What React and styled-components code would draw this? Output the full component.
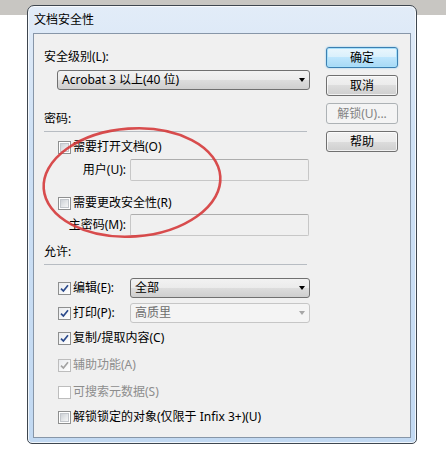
import React from 'react';
import styled, { createGlobalStyle } from 'styled-components';

const GlobalStyle = createGlobalStyle`
  html, body {
    margin: 0;
    padding: 0;
    background: #fff;
  }
  body {
    font-family: "Noto Sans", "Noto Sans CJK SC", sans-serif;
    font-size: 12px;
    color: #000;
  }
`;

const Page = styled.div`
  position: relative;
  width: 446px;
  height: 469px;
  overflow: hidden;
  box-sizing: border-box;
  padding: 5px 0 0 27px;
  background: linear-gradient(#c8c6c2 0, #c8c6c2 15px, #fff 15px);
`;

const Window = styled.div`
  width: 390px;
  height: 439px;
  box-sizing: border-box;
  border: 1px solid #3e464f;
  border-radius: 7px 7px 5px 5px;
  background: linear-gradient(180deg, #e2ecf8 0%, #cfe1f5 30%, #c2d9f2 100%);
  box-shadow: inset 0 0 0 1px rgba(255, 255, 255, 0.75);
  padding: 0 5px 5px 5px;
  display: flex;
  flex-direction: column;
`;

const TitleBar = styled.div`
  height: 27px;
  display: flex;
  align-items: center;
  padding: 1px 0 0 1px;
  box-sizing: border-box;
  font-size: 12px;
  line-height: 16px;
`;

const Client = styled.div`
  flex: 1;
  box-sizing: border-box;
  border: 1px solid #8796a8;
  background: #f0f0f0;
  display: flex;
  padding: 14px 0 0 10px;
`;

const LeftCol = styled.div`
  width: 266px;
  padding-top: 1px;
  display: flex;
  flex-direction: column;
`;

const RightCol = styled.div`
  width: 72px;
  margin: -1px 0 0 16px;
  display: flex;
  flex-direction: column;
  gap: 7px;
`;

const Label = styled.div`
  line-height: 16px;
  height: 16px;
  margin-top: ${(p) => p.$mt || 0}px;
`;

const Separator = styled.div`
  width: 263px;
  height: 1px;
  background: #b7bcc2;
  margin-top: 4px;
`;

const Combo = styled.div`
  box-sizing: border-box;
  height: 20px;
  width: ${(p) => p.$w}px;
  margin-left: ${(p) => p.$ml || 0}px;
  margin-top: ${(p) => p.$mt || 0}px;
  border: 1px solid ${(p) => (p.$disabled ? '#c6c6c6' : '#707070')};
  border-radius: 3px;
  background: ${(p) =>
    p.$disabled
      ? '#f4f4f4'
      : 'linear-gradient(180deg, #f2f2f2 0%, #ebebeb 50%, #dddddd 50%, #cfcfcf 100%)'};
  color: ${(p) => (p.$disabled ? '#6d6d6d' : '#000')};
  display: flex;
  align-items: center;
  justify-content: space-between;
  padding: 0 4px 0 4px;
  line-height: 16px;
`;

const Arrow = styled.span`
  width: 0;
  height: 0;
  border-left: 3.5px solid transparent;
  border-right: 3.5px solid transparent;
  border-top: 4px solid ${(p) => (p.$disabled ? '#a6a6a6' : '#000')};
`;

const Row = styled.div`
  display: flex;
  align-items: center;
  height: ${(p) => p.$h || 16}px;
  margin-top: ${(p) => p.$mt || 0}px;
  padding-left: ${(p) => p.$pl || 0}px;
`;

const FieldLabel = styled.div`
  width: ${(p) => p.$w}px;
  flex: none;
  display: flex;
  align-items: center;
  justify-content: ${(p) => (p.$right ? 'flex-end' : 'flex-start')};
  line-height: 16px;
`;

const TextInput = styled.div`
  box-sizing: border-box;
  width: 179px;
  height: 22px;
  margin-left: 4px;
  border: 1px solid #c7c7c7;
  border-top-color: #adadad;
  border-radius: 2px;
  background: #f0f0f0;
`;

const CheckText = styled.span`
  margin-left: 2px;
  line-height: 16px;
  white-space: nowrap;
  color: ${(p) => (p.$disabled ? '#8d8d8d' : '#000')};
`;

const Box = styled.span`
  flex: none;
  box-sizing: border-box;
  width: 13px;
  height: 13px;
  border: 1px solid ${(p) => (p.$disabled ? '#bdbdbd' : '#8e8f8f')};
  background: #fff;
  display: flex;
  align-items: center;
  justify-content: center;
  ${(p) =>
    !p.$checked && !p.$disabled
      ? `&::after {
          content: '';
          width: 9px;
          height: 9px;
          box-sizing: border-box;
          border: 1px solid #c2c6cb;
          background: linear-gradient(135deg, #cdd1d6 0%, #e6e8ea 60%, #f5f5f5 100%);
        }`
      : ''}
  ${(p) =>
    p.$checked
      ? `background: linear-gradient(135deg, #e9ebee 0%, #fff 100%);`
      : ''}
`;

const Button = styled.div`
  box-sizing: border-box;
  height: 21px;
  border-radius: 3px;
  border: 1px solid #707070;
  background: linear-gradient(180deg, #f2f2f2 0%, #ebebeb 50%, #dddddd 50%, #cfcfcf 100%);
  box-shadow: inset 0 0 0 1px rgba(255, 255, 255, 0.7);
  display: flex;
  align-items: center;
  justify-content: center;
  line-height: 16px;
  ${(p) =>
    p.$default &&
    `border-color: #3c7fb1;
     background: linear-gradient(180deg, #eaf6fd 0%, #d9f0fc 50%, #bee6fd 50%, #a7d9f5 100%);
     box-shadow: inset 0 0 0 1px #a6e0fb, 0 0 2px #7cc4ef;`}
  ${(p) =>
    p.$disabled &&
    `border-color: #adb2b5;
     background: #f4f4f4;
     color: #838383;
     box-shadow: none;`}
`;

const Annotation = styled.svg`
  position: absolute;
  left: 38px;
  top: 122px;
  width: 190px;
  height: 124px;
  pointer-events: none;
`;

const Check = ({ checked, disabled }) => (
  <Box $checked={checked} $disabled={disabled}>
    {checked && (
      <svg width="9" height="9" viewBox="0 0 9 9">
        <path
          d="M1 4.6 L3.4 7 L8 1.3"
          fill="none"
          stroke={disabled ? '#a3a3a3' : '#2b4a8c'}
          strokeWidth="1.7"
        />
      </svg>
    )}
  </Box>
);

const CheckItem = ({ checked, disabled, children, mt }) => (
  <Row $mt={mt} $pl={14}>
    <Check checked={checked} disabled={disabled} />
    <CheckText $disabled={disabled}>{children}</CheckText>
  </Row>
);

const App = () => {
  return (
    <Page>
      <GlobalStyle />
      <Window>
        <TitleBar>文档安全性</TitleBar>
        <Client>
          <LeftCol>
            <Label>安全级别(L):</Label>
            <Combo $w={253} $ml={13} $mt={5}>
              <span>Acrobat 3 以上(40 位)</span>
              <Arrow />
            </Combo>

            <Label $mt={21}>密码:</Label>
            <Separator />
            <CheckItem mt={7}>需要打开文档(O)</CheckItem>
            <Row $h={22} $mt={4}>
              <FieldLabel $w={82} $right>用户(U):</FieldLabel>
              <TextInput />
            </Row>
            <CheckItem mt={14}>需要更改安全性(R)</CheckItem>
            <Row $h={22} $mt={3}>
              <FieldLabel $w={82} $right>主密码(M):</FieldLabel>
              <TextInput />
            </Row>

            <Label $mt={8}>允许:</Label>
            <Separator />
            <Row $h={20} $mt={13} $pl={14}>
              <FieldLabel $w={68}>
                <Check checked />
                <CheckText>编辑(E):</CheckText>
              </FieldLabel>
              <Combo $w={180} $ml={4}>
                <span>全部</span>
                <Arrow />
              </Combo>
            </Row>
            <Row $h={20} $mt={5} $pl={14}>
              <FieldLabel $w={68}>
                <Check checked />
                <CheckText>打印(P):</CheckText>
              </FieldLabel>
              <Combo $w={180} $ml={4} $disabled>
                <span>高质里</span>
                <Arrow $disabled />
              </Combo>
            </Row>
            <CheckItem checked mt={7}>复制/提取内容(C)</CheckItem>
            <CheckItem checked disabled mt={11}>辅助功能(A)</CheckItem>
            <CheckItem disabled mt={11}>可搜索元数据(S)</CheckItem>
            <CheckItem mt={9}>解锁锁定的对象(仅限于 Infix 3+)(U)</CheckItem>
          </LeftCol>

          <RightCol>
            <Button $default>确定</Button>
            <Button>取消</Button>
            <Button $disabled>解锁(U)...</Button>
            <Button>帮助</Button>
          </RightCol>
        </Client>
      </Window>

      <Annotation viewBox="0 0 190 124">
        <ellipse
          cx="94"
          cy="60.5"
          rx="88.5"
          ry="54"
          transform="rotate(-4 94 60.5)"
          fill="none"
          stroke="#d53a3b"
          strokeWidth="2.6"
          opacity="0.9"
        />
      </Annotation>
    </Page>
  );
};

export default App;
